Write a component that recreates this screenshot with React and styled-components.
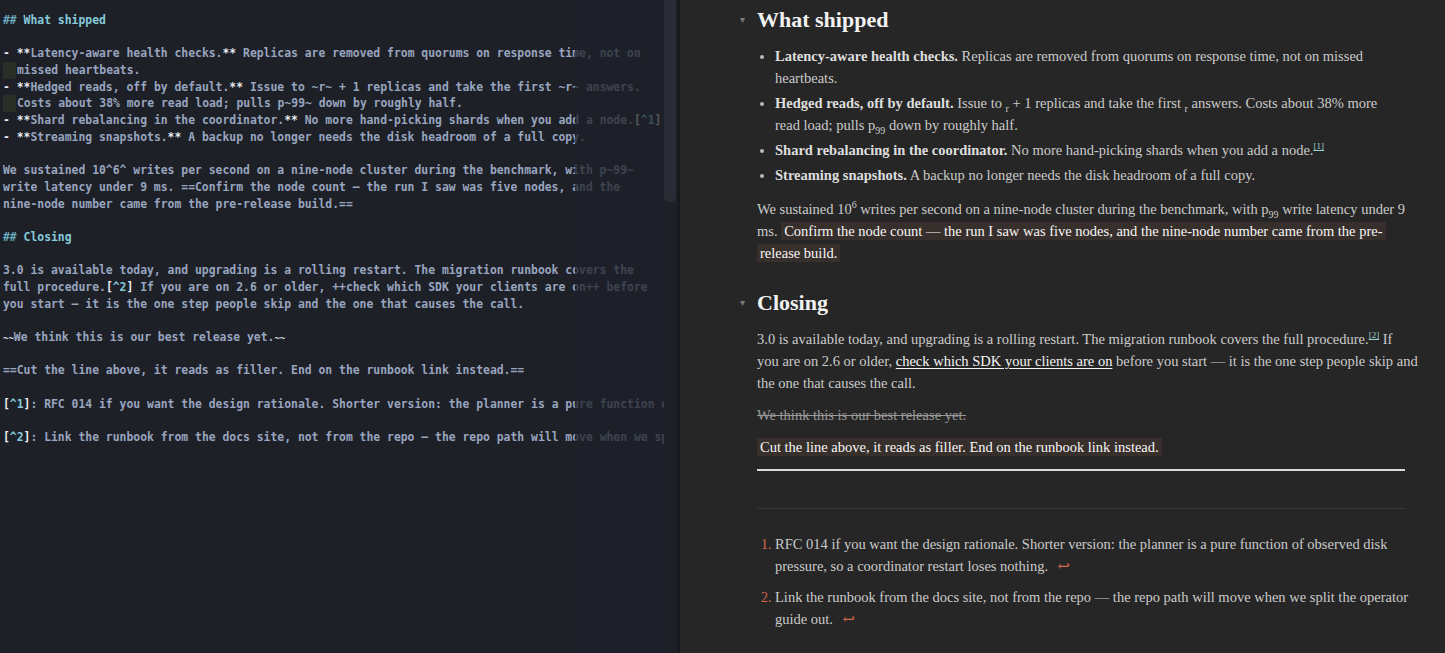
import React from "react";
import styled, { createGlobalStyle } from "styled-components";

const Global = createGlobalStyle`
  html, body { margin: 0; padding: 0; background: #262626; }
  body { width: 1445px; height: 653px; overflow: hidden; }
  #root { height: 653px; }
`;

const Shell = styled.div`
  display: flex;
  width: 1445px;
  height: 653px;
  overflow: hidden;
`;

/* ---------- editor ---------- */
const Editor = styled.div`
  position: relative;
  width: 677px;
  flex: none;
  background: #1e2028;
  overflow: hidden;
`;

const Code = styled.div`
  width: 664px;
  overflow: hidden;
  padding: 12px 0 0 3px;
  box-sizing: border-box;
  font-family: "DejaVu Sans Mono", "Liberation Mono", monospace;
  font-size: 11.4px;
  font-weight: bold;
  line-height: 16.7px;
  color: #98a5bf;
`;

const Line = styled.div`
  position: relative;
  height: 16.7px;
  white-space: pre;
  padding-left: ${(p) => (p.$wrap ? "14px" : "0")};
  &::before {
    content: "";
    display: ${(p) => (p.$wrap ? "block" : "none")};
    position: absolute;
    left: 0;
    top: 0;
    width: 13px;
    height: 16.7px;
    background: #2b2d27;
  }
`;

const Mk = styled.span`
  color: #e8ecf2;
`;
const Hd = styled.span`
  color: #86cadb;
`;
const HdMark = styled.span`
  color: #6aa9bd;
`;
const Ref = styled.span`
  color: #86cadb;
`;
const Tilde = styled.span`
  color: #e8ecf2;
  font-size: 9px;
`;

const Fade = styled.div`
  position: absolute;
  top: 0;
  left: 575px;
  width: 89px;
  height: 100%;
  background: rgba(30, 32, 40, 0.74);
  pointer-events: none;
`;

const Scroll = styled.div`
  position: absolute;
  top: 0;
  left: 664px;
  width: 12px;
  height: 202px;
  border-radius: 0 0 5px 5px;
  background: #292c34;
`;

/* ---------- preview ---------- */
const Preview = styled.div`
  flex: 1;
  min-width: 0;
  background: #262626;
  border-left: 3px solid #18191d;
  padding: 6px 40px 0 77px;
  box-sizing: border-box;
  font-family: "Liberation Serif", "DejaVu Serif", serif;
  font-size: 14.5px;
  line-height: 22px;
  color: #cbcbcb;
`;

const H2 = styled.h2`
  position: relative;
  margin: ${(p) => p.$top || 0}px 0 0;
  font-size: 22px;
  line-height: 28px;
  font-weight: bold;
  color: #f2f2f2;
  &::before {
    content: "▾";
    position: absolute;
    left: -17px;
    top: 0;
    font-size: 10px;
    color: #7a7a7a;
    font-weight: normal;
  }
`;

const List = styled.ul`
  margin: 11px 0 0;
  padding: 0 0 0 18px;
  white-space: nowrap;
  li { margin-bottom: 3px; }
  li::marker { color: #bbb; }
`;

const P = styled.p`
  margin: ${(p) => p.$top || 10}px 0 0;
  white-space: nowrap;
`;

const B = styled.b`
  color: #dedede;
`;

const Mark = styled.mark`
  background: #372f2c;
  color: #f7f7f7;
  padding: 1px 3px;
`;

const Link = styled.a`
  color: #f4f4f4;
  text-decoration: underline;
  text-underline-offset: 2px;
`;

const Sub = styled.sub`
  font-size: 10px;
  line-height: 0;
`;
const Sup = styled.sup`
  font-size: 10px;
  line-height: 0;
`;
const FnRef = styled.sup`
  font-size: 9px;
  line-height: 0;
  color: #9bd3d0;
  text-decoration: underline;
`;

const Strike = styled.p`
  margin: 10px 0 0;
  color: #9a9a9a;
  text-decoration: line-through;
`;

const Rule = styled.hr`
  margin: ${(p) => p.$top}px 0 0;
  border: none;
  height: ${(p) => p.$h}px;
  background: ${(p) => p.$c};
`;

const Notes = styled.ol`
  margin: 24px 0 0;
  padding: 0 0 0 18px;
  white-space: nowrap;
  li { margin-bottom: 9px; }
  li::marker { color: #d7684b; font-size: 14px; }
`;

const Back = styled.span`
  color: #d7684b;
  margin-left: 6px;
`;

const Ed = () => (
  <Editor>
    <Code>
      <Line><HdMark>##</HdMark> <Hd>What shipped</Hd></Line>
      <Line />
      <Line><Mk>-</Mk> <Mk>**</Mk>Latency-aware health checks.<Mk>**</Mk> Replicas are removed from quorums on response time, not on</Line>
      <Line $wrap>missed heartbeats.</Line>
      <Line><Mk>-</Mk> <Mk>**</Mk>Hedged reads, off by default.<Mk>**</Mk> Issue to ~r~ + 1 replicas and take the first ~r~ answers.</Line>
      <Line $wrap>Costs about 38% more read load; pulls p~99~ down by roughly half.</Line>
      <Line><Mk>-</Mk> <Mk>**</Mk>Shard rebalancing in the coordinator.<Mk>**</Mk> No more hand-picking shards when you add a node.<Mk>[</Mk><Ref>^1</Ref><Mk>]</Mk></Line>
      <Line><Mk>-</Mk> <Mk>**</Mk>Streaming snapshots.<Mk>**</Mk> A backup no longer needs the disk headroom of a full copy.</Line>
      <Line />
      <Line>We sustained 10^6^ writes per second on a nine-node cluster during the benchmark, with p~99~</Line>
      <Line>write latency under 9 ms. ==Confirm the node count – the run I saw was five nodes, and the</Line>
      <Line>nine-node number came from the pre-release build.==</Line>
      <Line />
      <Line><HdMark>##</HdMark> <Hd>Closing</Hd></Line>
      <Line />
      <Line>3.0 is available today, and upgrading is a rolling restart. The migration runbook covers the</Line>
      <Line>full procedure.<Mk>[</Mk><Ref>^2</Ref><Mk>]</Mk> If you are on 2.6 or older, ++check which SDK your clients are on++ before</Line>
      <Line>you start – it is the one step people skip and the one that causes the call.</Line>
      <Line />
      <Line><Tilde>~~</Tilde>We think this is our best release yet.<Tilde>~~</Tilde></Line>
      <Line />
      <Line>==Cut the line above, it reads as filler. End on the runbook link instead.==</Line>
      <Line />
      <Line><Mk>[</Mk><Ref>^1</Ref><Mk>]</Mk>: RFC 014 if you want the design rationale. Shorter version: the planner is a pure function of observed disk pressure, so a coordinator restart loses nothing.</Line>
      <Line />
      <Line><Mk>[</Mk><Ref>^2</Ref><Mk>]</Mk>: Link the runbook from the docs site, not from the repo – the repo path will move when we split the operator guide out.</Line>
    </Code>
    <Fade />
    <Scroll />
  </Editor>
);

const Pv = () => (
  <Preview>
    <H2>What shipped</H2>
    <List>
      <li><B>Latency-aware health checks.</B> Replicas are removed from quorums on response time, not on missed<br />heartbeats.</li>
      <li><B>Hedged reads, off by default.</B> Issue to <Sub>r</Sub> + 1 replicas and take the first <Sub>r</Sub> answers. Costs about 38% more<br />read load; pulls p<Sub>99</Sub> down by roughly half.</li>
      <li><B>Shard rebalancing in the coordinator.</B> No more hand-picking shards when you add a node.<FnRef>[1]</FnRef></li>
      <li><B>Streaming snapshots.</B> A backup no longer needs the disk headroom of a full copy.</li>
    </List>
    <P $top={12}>
      We sustained 10<Sup>6</Sup> writes per second on a nine-node cluster during the benchmark, with p<Sub>99</Sub> write latency under 9<br />ms. <Mark>Confirm the node count — the run I saw was five nodes, and the nine-node number came from the pre-</Mark><br /><Mark>release build.</Mark>
    </P>
    <H2 $top={25}>Closing</H2>
    <P $top={11}>
      3.0 is available today, and upgrading is a rolling restart. The migration runbook covers the full procedure.<FnRef>[2]</FnRef> If<br />you are on 2.6 or older, <Link>check which SDK your clients are on</Link> before you start — it is the one step people skip and<br />the one that causes the call.
    </P>
    <Strike>We think this is our best release yet.</Strike>
    <P><Mark>Cut the line above, it reads as filler. End on the runbook link instead.</Mark></P>
    <Rule $top={11} $h={2} $c="#d9d9d9" />
    <Rule $top={37} $h={1} $c="#383838" />
    <Notes>
      <li>RFC 014 if you want the design rationale. Shorter version: the planner is a pure function of observed disk<br />pressure, so a coordinator restart loses nothing. <Back>↩</Back></li>
      <li>Link the runbook from the docs site, not from the repo — the repo path will move when we split the operator<br />guide out. <Back>↩</Back></li>
    </Notes>
  </Preview>
);

export default function App() {
  return (
    <>
      <Global />
      <Shell>
        <Ed />
        <Pv />
      </Shell>
    </>
  );
}
